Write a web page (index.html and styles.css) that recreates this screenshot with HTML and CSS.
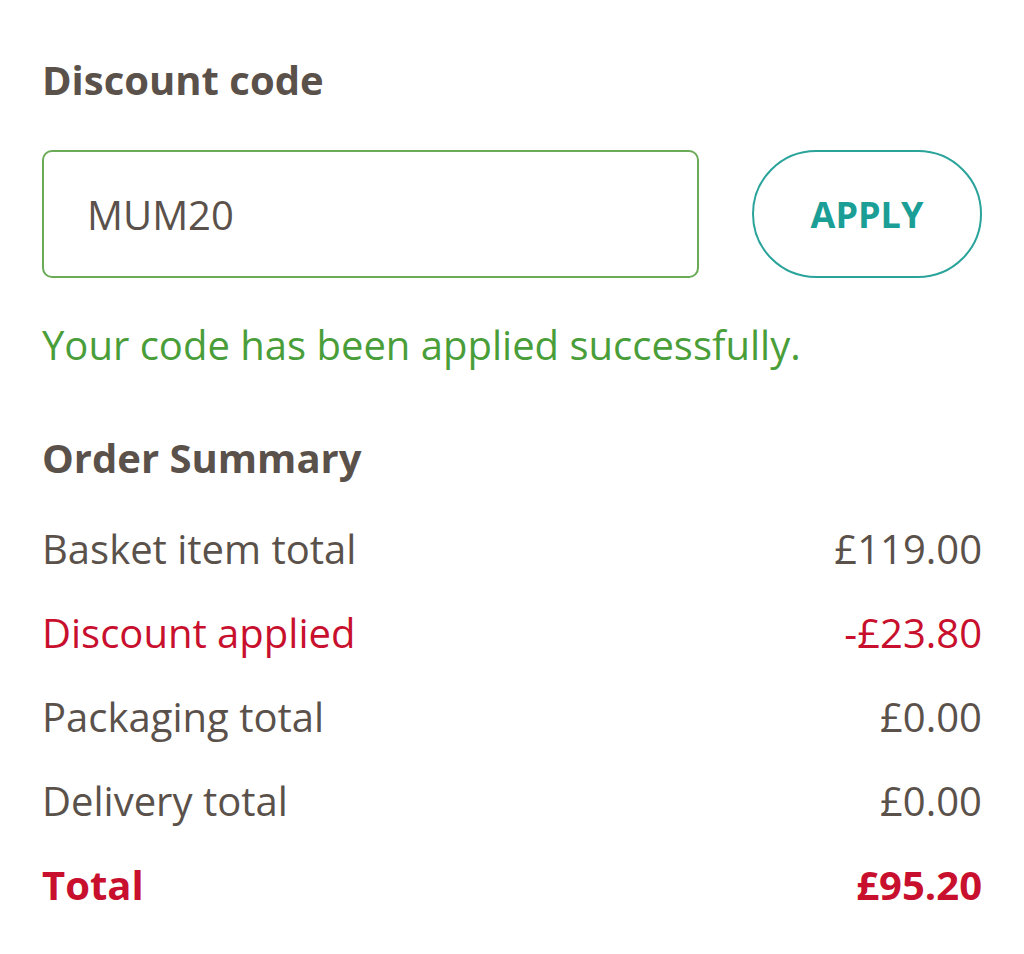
FILE: index.html
```html
<!DOCTYPE html>
<html lang="en">
<head>
<meta charset="utf-8">
<title>Discount code</title>
<link rel="stylesheet" href="styles.css">
</head>
<body>
<main class="panel">
  <h2 class="heading">Discount code</h2>
  <div class="code-row">
    <div class="code-input">MUM20</div>
    <button class="apply-btn" type="button">APPLY</button>
  </div>
  <p class="success">Your code has been applied successfully.</p>
  <h2 class="heading summary-heading">Order Summary</h2>
  <div class="summary">
    <div class="line"><span>Basket item total</span><span>£119.00</span></div>
    <div class="line discount"><span>Discount applied</span><span>-£23.80</span></div>
    <div class="line"><span>Packaging total</span><span>£0.00</span></div>
    <div class="line"><span>Delivery total</span><span>£0.00</span></div>
    <div class="line total"><span>Total</span><span>£95.20</span></div>
  </div>
</main>
</body>
</html>
```

FILE: styles.css
```css
* { box-sizing: border-box; }
html, body { margin: 0; padding: 0; background: #ffffff; }
body { font-family: "Open Sans", "Noto Sans", sans-serif; color: #5b514b; }
.panel { padding: 56px 42px 0 42px; }
.heading { margin: 0; font-size: 40px; font-weight: 700; line-height: 48px; color: #5b514b; }
.code-row { display: flex; gap: 53px; margin-top: 46px; }
.code-input { flex: 0 0 657px; height: 128px; border: 2px solid #6aab57; border-radius: 10px; padding-left: 43px; display: flex; align-items: center; font-size: 40px; color: #5b514b; }
.apply-btn { flex: 1; height: 128px; border: 2px solid #2aa39a; border-radius: 64px; background: #fff; font-family: inherit; font-size: 36px; font-weight: 700; color: #1a9e95; padding: 0; }
.success { margin: 42px 0 0 0; font-size: 40px; line-height: 50px; color: #4a9e3a; }
.summary-heading { margin-top: 64px; }
.summary { margin-top: 25px; display: flex; flex-direction: column; }
.line { display: flex; justify-content: space-between; font-size: 40px; line-height: 84px; height: 84px; }
.discount { color: #c8102e; }
.total { color: #c8102e; font-weight: 700; }
```
